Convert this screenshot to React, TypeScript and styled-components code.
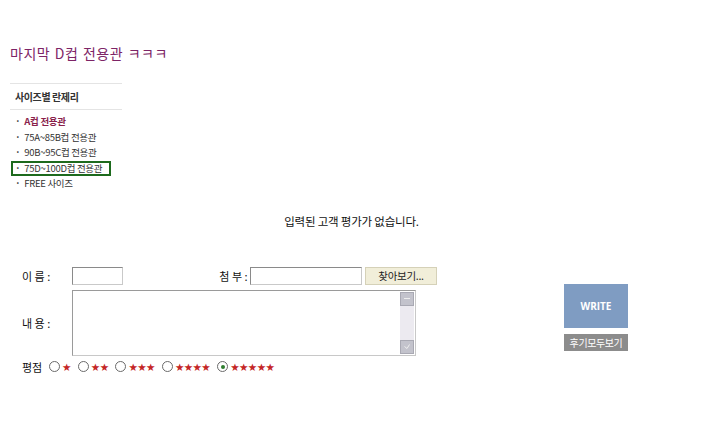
import React from 'react';
import styled, { createGlobalStyle } from 'styled-components';

const GlobalStyle = createGlobalStyle`
    body {
        margin: 0;
        background: #fff;
        font-family: "Noto Sans CJK KR", "Noto Sans", sans-serif;
        color: #222;
    }
`;

const Page = styled.div`
    width: 703px;
    height: 444px;
    overflow: hidden;
`;

const Top = styled.div`
    padding-left: 10px;
`;

const Title = styled.h1`
    margin: 0;
    padding-top: 44px;
    font-size: 14px;
    line-height: 18px;
    font-weight: 400;
    color: #7d2466;
    letter-spacing: 0.5px;
    word-spacing: 1px;
`;

const Sidebar = styled.div`
    width: 112px;
    margin-top: 21px;
`;

const SideHeader = styled.div`
    border-top: 1px solid #e4e4e4;
    border-bottom: 1px solid #e4e4e4;
    height: 25px;
    padding-left: 5px;
    display: flex;
    align-items: center;
    font-size: 10px;
    font-weight: 700;
    color: #333;
    letter-spacing: -0.4px;
`;

const SideList = styled.ul`
    list-style: none;
    margin: 4px 0 0;
    padding: 0;
`;

const SideItem = styled.li<{ $active?: boolean; $boxed?: boolean }>`
    height: 15.5px;
    line-height: 15px;
    font-size: 9.5px;
    letter-spacing: -0.3px;
    color: ${({ $active }) => ($active ? '#8a1f4c' : '#333')};
    font-weight: ${({ $active }) => ($active ? 700 : 400)};
    width: 100px;
    box-sizing: border-box;
    margin-left: 1px;
    border: 2px solid ${({ $boxed }) => ($boxed ? '#1d6a1d' : 'transparent')};
    padding-left: 2px;
    display: flex;
    align-items: center;

    &::before {
        content: '·';
        margin-right: 4px;
        font-weight: 700;
        color: #333;
    }
`;

const Message = styled.p`
    margin: 21px 0 0;
    text-align: center;
    font-size: 11.5px;
    letter-spacing: -0.2px;
    color: #111;
`;

const FormArea = styled.div`
    display: flex;
    margin-top: 38px;
    padding-left: 22px;
`;

const FormGrid = styled.div`
    width: 430px;
    display: flex;
    flex-direction: column;
`;

const Row = styled.div<{ $height: number; $mt?: number }>`
    display: flex;
    align-items: center;
    height: ${({ $height }) => $height}px;
    margin-top: ${({ $mt }) => $mt ?? 0}px;
`;

const Label = styled.span<{ $width?: number; $align?: string }>`
    width: ${({ $width }) => $width ?? 50}px;
    flex-shrink: 0;
    font-size: 11px;
    color: #111;
    text-align: ${({ $align }) => $align ?? 'left'};
    white-space: pre;
`;

const TextInput = styled.div<{ $width: number }>`
    width: ${({ $width }) => $width}px;
    height: 18px;
    box-sizing: border-box;
    border: 1px solid #8a8a8a;
    border-right-color: #c9c9c9;
    border-bottom-color: #c9c9c9;
    background: #fff;
`;

const FindButton = styled.div`
    margin-left: 3px;
    width: 72px;
    height: 18px;
    box-sizing: border-box;
    background: #f1eed9;
    border: 1px solid #d5d1b8;
    font-size: 10.5px;
    display: flex;
    align-items: center;
    justify-content: center;
    color: #222;
    letter-spacing: -0.3px;
`;

const TextBox = styled.div`
    width: 344px;
    height: 66px;
    box-sizing: border-box;
    border: 1px solid #9a9a9a;
    border-right-color: #c8c8c8;
    border-bottom-color: #c8c8c8;
    display: flex;
    justify-content: flex-end;
    padding: 1px;
`;

const Scrollbar = styled.div`
    width: 14px;
    background: #eceaf0;
    display: flex;
    flex-direction: column;
    justify-content: space-between;
`;

const ScrollButton = styled.div`
    width: 14px;
    height: 14px;
    box-sizing: border-box;
    background: #c3c3cc;
    border: 1px solid #a9a9b3;
    display: flex;
    align-items: center;
    justify-content: center;
`;

const RatingRow = styled.div`
    display: flex;
    align-items: center;
    height: 16px;
    margin-top: 3px;
`;

const RatingLabel = styled.span`
    font-size: 11px;
    width: 27px;
    color: #111;
`;

const RatingOption = styled.span`
    display: flex;
    align-items: center;
    margin-right: 7px;
`;

const Radio = styled.span<{ $checked?: boolean }>`
    width: 11px;
    height: 11px;
    box-sizing: border-box;
    border: 1px solid #6a6a6a;
    border-radius: 50%;
    background: #fff;
    display: flex;
    align-items: center;
    justify-content: center;
    margin-right: 2px;

    &::after {
        content: '';
        width: 4px;
        height: 4px;
        border-radius: 50%;
        background: ${({ $checked }) => ($checked ? '#2f7d2f' : 'transparent')};
    }
`;

const Stars = styled.span`
    color: #c42626;
    font-size: 10.5px;
    letter-spacing: -0.6px;
    font-family: "DejaVu Sans", sans-serif;
`;

const SideButtons = styled.div`
    margin-left: 112px;
    margin-top: 17px;
    display: flex;
    flex-direction: column;
    gap: 6px;
`;

const WriteButton = styled.div`
    width: 64px;
    height: 44px;
    background: #7f9cc2;
    color: #fff;
    font-family: "Open Sans", "Noto Sans", sans-serif;
    font-weight: 700;
    font-size: 10px;
    display: flex;
    align-items: center;
    justify-content: center;
`;

const AllButton = styled.div`
    width: 64px;
    height: 17px;
    background: #8c8c8c;
    color: #fff;
    font-size: 10px;
    letter-spacing: -0.4px;
    display: flex;
    align-items: center;
    justify-content: center;
`;

const sizes = [
    { text: 'A컵 전용관', active: true },
    { text: '75A~85B컵 전용관' },
    { text: '90B~95C컵 전용관' },
    { text: '75D~100D컵 전용관', boxed: true },
    { text: 'FREE 사이즈' },
];

export default function App() {
    return (
        <Page>
            <GlobalStyle />
            <Top>
                <Title>마지막 D컵 전용관 ㅋㅋㅋ</Title>
                <Sidebar>
                    <SideHeader>사이즈별 란제리</SideHeader>
                    <SideList>
                        {sizes.map(s => (
                            <SideItem key={s.text} $active={s.active} $boxed={s.boxed}>{s.text}</SideItem>
                        ))}
                    </SideList>
                </Sidebar>
            </Top>
            <Message>입력된 고객 평가가 없습니다.</Message>
            <FormArea>
                <FormGrid>
                    <Row $height={18}>
                        <Label>이 름 :</Label>
                        <TextInput $width={51} />
                        <Label $width={127} $align="right">첨 부 : </Label>
                        <TextInput $width={112} />
                        <FindButton>찾아보기...</FindButton>
                    </Row>
                    <Row $height={66} $mt={5}>
                        <Label>내 용 :</Label>
                        <TextBox>
                            <Scrollbar>
                                <ScrollButton>
                                    <svg width="6" height="2"><rect width="6" height="1" fill="#eee" /></svg>
                                </ScrollButton>
                                <ScrollButton>
                                    <svg width="6" height="5"><path d="M0.5 2.5 L3 4.5 L5.5 0.5" fill="none" stroke="#eee" strokeWidth="1" /></svg>
                                </ScrollButton>
                            </Scrollbar>
                        </TextBox>
                    </Row>
                    <RatingRow>
                        <RatingLabel>평점</RatingLabel>
                        {[1, 2, 3, 4, 5].map(n => (
                            <RatingOption key={n}>
                                <Radio $checked={n === 5} />
                                <Stars>{'★'.repeat(n)}</Stars>
                            </RatingOption>
                        ))}
                    </RatingRow>
                </FormGrid>
                <SideButtons>
                    <WriteButton>WRITE</WriteButton>
                    <AllButton>후기모두보기</AllButton>
                </SideButtons>
            </FormArea>
        </Page>
    );
}
